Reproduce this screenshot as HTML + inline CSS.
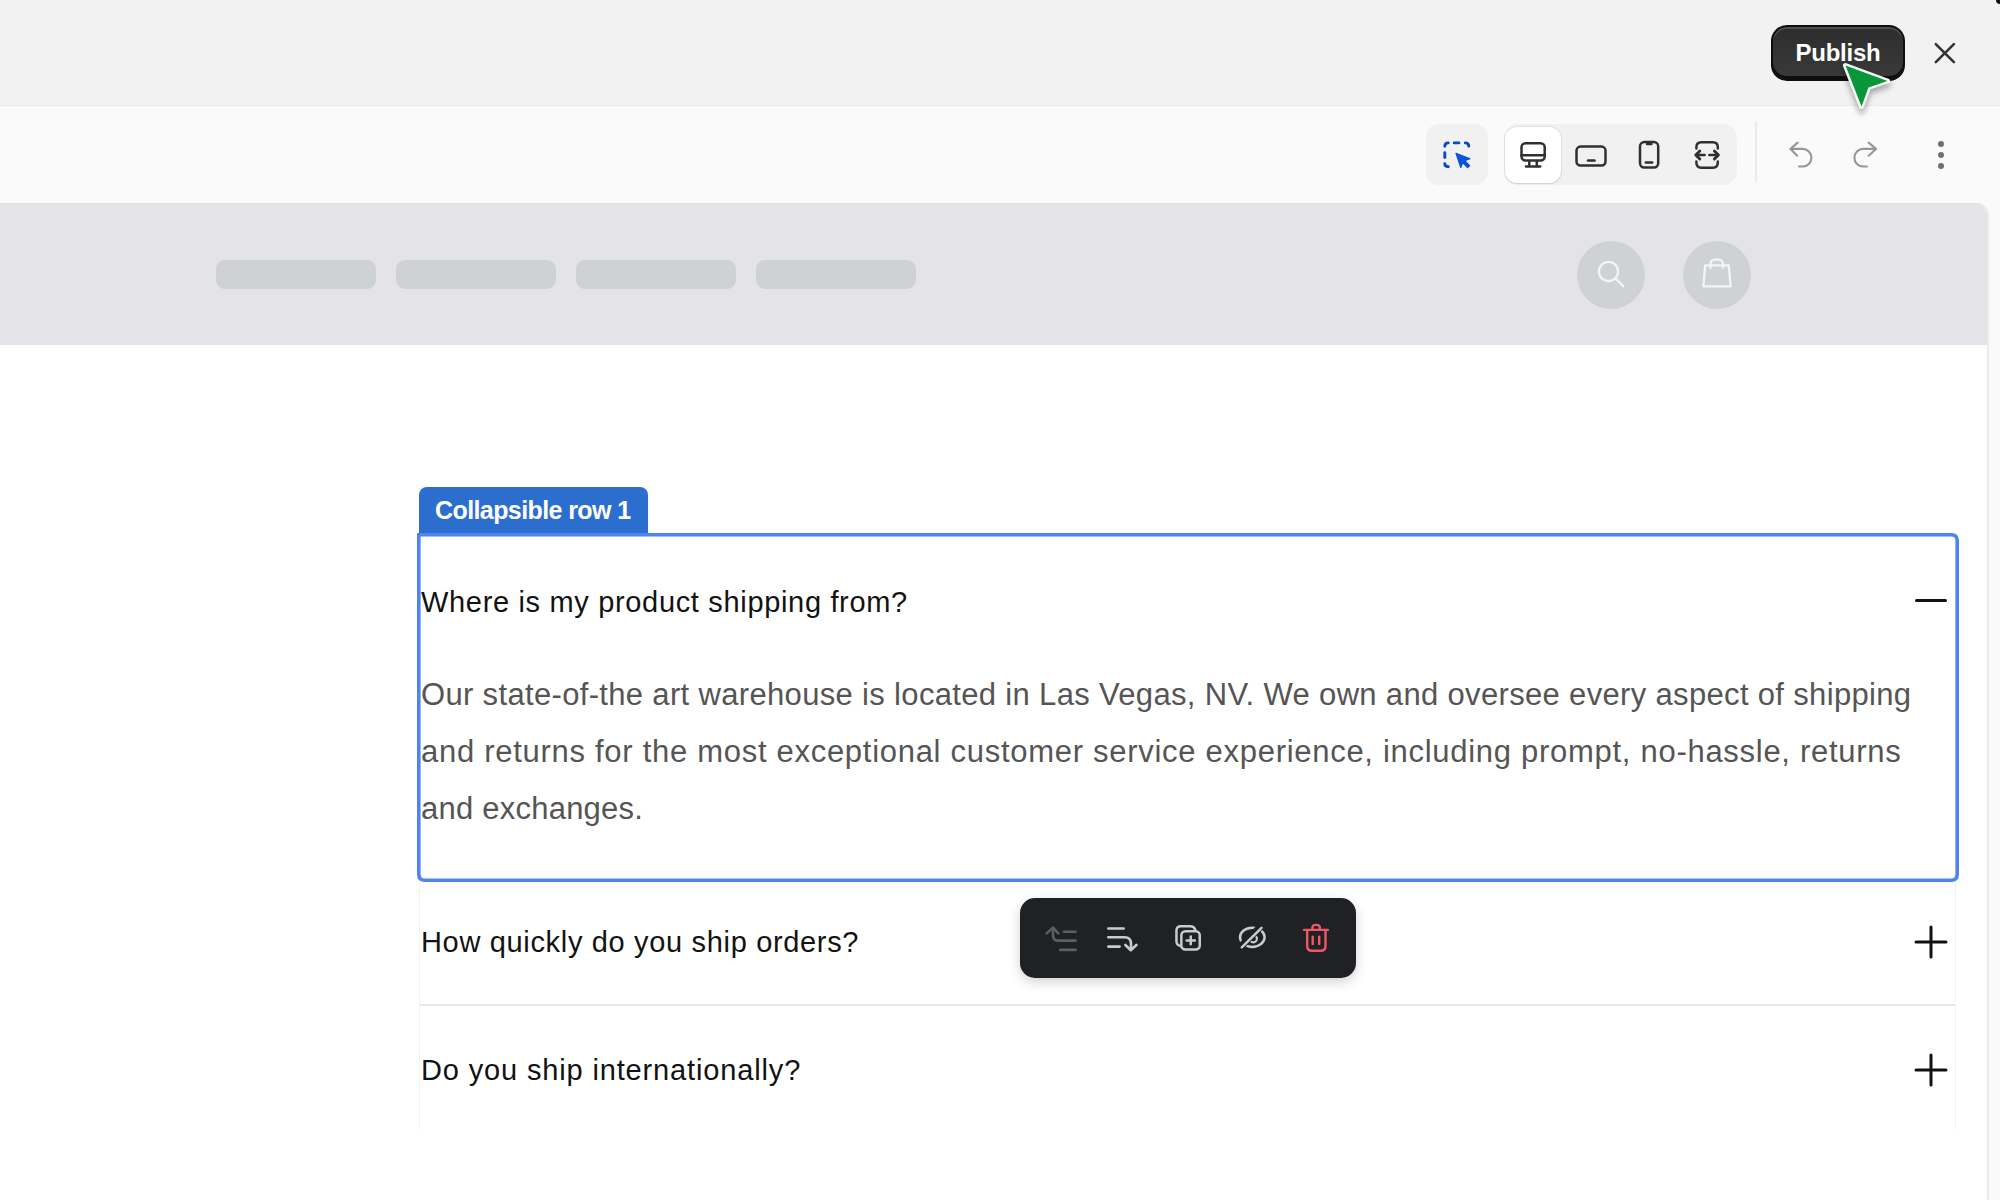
<!DOCTYPE html>
<html>
<head>
<meta charset="utf-8">
<style>
*{box-sizing:border-box;margin:0;padding:0}
html,body{width:2000px;height:1200px;overflow:hidden}
body{background:#fafafa;font-family:"Liberation Sans",sans-serif;position:relative}
.abs{position:absolute}
svg{position:absolute;overflow:visible}
#topbar{left:0;top:0;width:2000px;height:106px;background:#f2f2f2;border-bottom:1px solid #ebebeb}
#toolbar{left:0;top:106px;width:2000px;height:98px;background:#fafafa}
#publish{left:1771px;top:25px;width:134px;height:56px;border-radius:16px;background:linear-gradient(#2d2d2d,#3a3a3a);border:2px solid #0e0e0e;box-shadow:inset 0 -3px 0 #0e0e0e, inset 0 2px 0 #505050;color:#fff;font-weight:bold;font-size:24px;letter-spacing:-0.25px;line-height:52px;text-align:center}
#canvas{left:0;top:203px;width:1989px;height:1000px;background:#fff;border-top:1px solid #e2e2e2;border-right:2px solid #ebebeb;border-top-right-radius:12px;overflow:hidden}
#hdr{left:0;top:0;width:1987px;height:141px;background:#e4e3e7}
.pill{top:56px;width:160px;height:29px;border-radius:9px;background:#cfd2d5}
.circ{top:37px;width:68px;height:68px;border-radius:50%;background:#cfd2d5}
.h{font-size:29px;line-height:40px;color:#121212;white-space:nowrap}
.p{font-size:31px;line-height:57px;color:#555;white-space:nowrap}
</style>
</head>
<body>
<div id="topbar" class="abs"></div>
<div class="abs" style="left:1996px;top:-4px;width:8px;height:8px;border-radius:50%;background:#111"></div>
<div id="publish" class="abs">Publish</div>
<!-- close X -->
<svg style="left:1930px;top:38px" width="30" height="30" viewBox="0 0 30 30"><path d="M5.8 6.1L23.9 24.1M23.9 6.1L5.8 24.1" stroke="#333" stroke-width="2.6" stroke-linecap="round" fill="none"/></svg>

<div id="toolbar" class="abs"></div>
<!-- select button -->
<div class="abs" style="left:1426px;top:124px;width:62px;height:61px;border-radius:13px;background:#f1f1f1"></div>
<svg style="left:1443px;top:141px" width="28" height="28" viewBox="0 0 28 28">
 <g stroke="#0c48c4" stroke-width="2.9" stroke-linecap="round" fill="none">
  <path d="M1.8 5.3Q1.8 1.9 5.2 1.9"/>
  <path d="M11.2 1.9H15.9"/>
  <path d="M22.3 1.9Q25.8 1.9 25.8 5.3"/>
  <path d="M1.8 11.8V16.6"/>
  <path d="M1.8 22.6Q1.8 25.8 5.3 25.8"/>
 </g>
 <path d="M13 12.3L27 17.7L21.6 19.7L26.7 24.6L24.6 26.7L19.6 21.7L17.8 26.6Z" fill="#0c55dc" stroke="#0c50d0" stroke-width="1.2" stroke-linejoin="round"/>
</svg>

<!-- device group -->
<div class="abs" style="left:1504px;top:124px;width:233px;height:61px;border-radius:14px;background:#f1f1f1"></div>
<div class="abs" style="left:1505px;top:127px;width:56px;height:56px;border-radius:12px;background:#fff;box-shadow:0 0 0 1px rgba(0,0,0,0.06),0 1px 2px rgba(0,0,0,0.08)"></div>
<svg style="left:1500px;top:130px" width="240" height="50" viewBox="0 0 240 50">
 <g stroke="#303030" stroke-width="2.5" fill="none" stroke-linecap="round" stroke-linejoin="round">
  <!-- monitor -->
  <rect x="21.5" y="13.3" width="23.2" height="17.2" rx="4"/>
  <path d="M21.5 25.3H44.7"/>
  <path d="M29.3 31V36M36.8 31V36"/>
  <path d="M26 36.4H40.2"/>
  <!-- tablet -->
  <rect x="76.5" y="16.6" width="29" height="19" rx="4"/>
  <path d="M88 30.4H94.5"/>
  <!-- phone -->
  <rect x="140" y="12.1" width="18.2" height="25.5" rx="4.3"/>
  <path d="M147 13.9H151.4"/>
  <path d="M145.8 32.5H152.2"/>
  <!-- fit -->
  <path d="M196.4 18.5V17.2Q196.4 12.3 201.3 12.3H212.9Q217.8 12.3 217.8 17.2V18.5"/>
  <path d="M196.4 31.4V32.8Q196.4 37.7 201.3 37.7H212.9Q217.8 37.7 217.8 32.8V31.4"/>
  <path d="M199.8 21L195.8 25L199.8 29" stroke-width="2.9"/>
  <path d="M214.4 21L218.4 25L214.4 29" stroke-width="2.9"/>
  <path d="M196.5 25H204.6M209.4 25H217.7" stroke-width="2.7"/>
 </g>
</svg>
<!-- separator -->
<div class="abs" style="left:1755px;top:122px;width:1.5px;height:61px;background:#ebebeb"></div>
<!-- undo / redo -->
<svg style="left:1780px;top:130px" width="110" height="50" viewBox="0 0 110 50">
 <g stroke="#969696" stroke-width="2.1" fill="none" stroke-linecap="round" stroke-linejoin="round">
  <path d="M17.6 12.6L10.6 18.9L17.1 25.7"/>
  <path d="M10.6 18.9H22.6A8.8 8.8 0 0 1 22.6 36.5H19"/>
  <path d="M88.7 12.6L95.9 18.9L88.7 25.7"/>
  <path d="M95.9 18.9H83.2A8.8 8.8 0 0 0 83.2 36.5H86.9"/>
 </g>
</svg>
<!-- more dots -->
<div class="abs" style="left:1937.8px;top:140.8px;width:6.2px;height:6.2px;border-radius:50%;background:#707070"></div>
<div class="abs" style="left:1937.8px;top:151.6px;width:6.2px;height:6.2px;border-radius:50%;background:#707070"></div>
<div class="abs" style="left:1937.8px;top:162.8px;width:6.2px;height:6.2px;border-radius:50%;background:#707070"></div>

<div id="canvas" class="abs">
  <div id="hdr" class="abs">
    <div class="abs pill" style="left:216px"></div>
    <div class="abs pill" style="left:396px"></div>
    <div class="abs pill" style="left:576px"></div>
    <div class="abs pill" style="left:756px"></div>
    <div class="abs circ" style="left:1577px"></div>
    <div class="abs circ" style="left:1683px"></div>
  </div>
</div>
<!-- header icons -->
<svg style="left:1590px;top:255px" width="40" height="40" viewBox="0 0 40 40">
 <g stroke="#f4f4f5" stroke-width="2.3" fill="none" stroke-linecap="round">
  <circle cx="18.5" cy="16.5" r="9.6"/>
  <path d="M25.8 23.8L33.2 31.2"/>
 </g>
</svg>
<svg style="left:1696px;top:255px" width="40" height="40" viewBox="0 0 40 40">
 <g stroke="#f4f4f5" stroke-width="2.3" fill="none" stroke-linejoin="round">
  <path d="M9.2 10.4H32.8L34.6 31.3H7.4Z"/>
  <path d="M14.5 13.8V9.2Q14.5 4.3 20.8 4.3Q27 4.3 27 9.2V13.8"/>
 </g>
</svg>
<!-- collapsible rows -->
<div class="abs" style="left:419px;top:487px;width:229px;height:48px;background:#2c6ecd;border-radius:8px 8px 0 0;color:#fff;font-weight:bold;font-size:25px;letter-spacing:-0.59px;line-height:46px;padding-left:16px">Collapsible row 1</div>
<svg style="left:410px;top:525px" width="1560" height="365" viewBox="0 0 1560 365"><path d="M8.8 9.8H1541.2Q1547.2 9.8 1547.2 15.8V349.2Q1547.2 355.2 1541.2 355.2H14.8Q8.8 355.2 8.8 349.2Z" fill="none" stroke="#4f84ee" stroke-width="3.6"/></svg>

<div class="abs h" style="left:421px;top:582px;letter-spacing:0.667px">Where is my product shipping from?</div>
<div class="abs" style="left:1915px;top:599px;width:32px;height:3px;border-radius:2px;background:#121212"></div>

<div class="abs p" style="left:421px;top:666px;letter-spacing:0.333px">Our state-of-the art warehouse is located in Las Vegas, NV. We own and oversee every aspect of shipping</div>
<div class="abs p" style="left:421px;top:723px;letter-spacing:0.713px">and returns for the most exceptional customer service experience, including prompt, no-hassle, returns</div>
<div class="abs p" style="left:421px;top:780px;letter-spacing:0.231px">and exchanges.</div>

<!-- rows 2/3 borders -->
<div class="abs" style="left:419px;top:881px;width:1px;height:248px;background:#f2f2f2"></div>
<div class="abs" style="left:1955px;top:881px;width:1px;height:248px;background:#f2f2f2"></div>
<div class="abs" style="left:420px;top:1004px;width:1535px;height:2px;background:#e8e8e8"></div>

<div class="abs h" style="left:421px;top:922px;letter-spacing:0.667px">How quickly do you ship orders?</div>
<div class="abs h" style="left:421px;top:1050px;letter-spacing:0.852px">Do you ship internationally?</div>
<svg style="left:1910px;top:921px" width="42" height="42" viewBox="0 0 42 42"><path d="M6 21H36M21 6V36" stroke="#121212" stroke-width="3" stroke-linecap="round" fill="none"/></svg>
<svg style="left:1910px;top:1049px" width="42" height="42" viewBox="0 0 42 42"><path d="M6 21H36M21 6V36" stroke="#121212" stroke-width="3" stroke-linecap="round" fill="none"/></svg>

<!-- floating toolbar -->
<div class="abs" style="left:1020px;top:898px;width:336px;height:80px;border-radius:15px;background:#202124;box-shadow:0 4px 12px rgba(0,0,0,0.18)"></div>
<svg style="left:1020px;top:898px" width="336" height="80" viewBox="0 0 336 80">
 <g stroke="#5d5f62" stroke-width="2.6" fill="none" stroke-linecap="round" stroke-linejoin="round">
  <path d="M26.7 35.4L33 29.6L38.3 35.4"/>
  <path d="M33 30V37.6Q33 42.6 38 42.6H55.6"/>
  <path d="M44 33.8H55.6"/>
  <path d="M40.2 51.9H55.6"/>
 </g>
 <g stroke="#c9cbcd" stroke-width="2.6" fill="none" stroke-linecap="round" stroke-linejoin="round">
  <path d="M88.3 30.5H103.7"/>
  <path d="M88.3 39.3H104.5Q111 39.3 111 46V51"/>
  <path d="M105.4 47L110.8 52.2L116.4 47"/>
  <path d="M88.3 48.6H99.6"/>
 </g>
 <g stroke="#c9cbcd" stroke-width="2.5" fill="none" stroke-linecap="round" stroke-linejoin="round">
  <path d="M175.5 32.6Q174.5 28.15 170 28.15H160.9Q156.45 28.15 156.45 32.6V43.2Q156.45 46.9 160.2 47.9"/>
  <rect x="161.35" y="33.15" width="18.4" height="18.4" rx="4"/>
  <path d="M166.6 42.4H174.9M170.75 38.6V46.2"/>
 </g>
 <ellipse cx="232.3" cy="39.3" rx="12.3" ry="9.6" fill="none" stroke="#c9cbcd" stroke-width="2.5"/>
 <circle cx="233.3" cy="40.7" r="3.6" fill="none" stroke="#c9cbcd" stroke-width="2.2"/>
 <path d="M220.8 48.4L240.5 28.8" stroke="#202124" stroke-width="7" stroke-linecap="butt"/>
 <path d="M221.8 49.4L241.5 29.8" stroke="#c9cbcd" stroke-width="2.5" stroke-linecap="round"/>
 <g stroke="#ef5864" stroke-width="2.4" fill="none" stroke-linecap="round" stroke-linejoin="round">
  <path d="M284.1 31.9H307.8"/>
  <path d="M292.45 31.5V29.5Q292.45 26.9 296.1 26.9Q299.8 26.9 299.8 29.5V31.5"/>
  <path d="M287.2 32.2V48Q287.2 52.8 292 52.8H300.7Q305.5 52.8 305.5 48V32.2"/>
  <path d="M292.7 38.7V45.9M299.2 38.7V45.9"/>
 </g>
</svg>

<!-- green cursor -->
<svg style="left:1820px;top:45px" width="90" height="80" viewBox="0 0 90 80">
 <defs><filter id="sh" x="-50%" y="-50%" width="200%" height="200%"><feGaussianBlur stdDeviation="2.5"/></filter></defs>
 <path d="M25.5 21.5L67.5 37L48.5 43.5L41.5 62.5Z" fill="rgba(0,0,0,0.2)" stroke="rgba(0,0,0,0.2)" stroke-width="8" stroke-linejoin="round" filter="url(#sh)" transform="translate(0,3)"/>
 <path d="M25.5 20.5L67.5 36L48.5 42.5L41.5 61.5Z" fill="#f4fff6" stroke="#f4fff6" stroke-width="5" stroke-linejoin="round"/>
 <path d="M25.5 20.5L67.5 36L48.5 42.5L41.5 61.5Z" fill="#08963a"/>
</svg>

</body>
</html>
